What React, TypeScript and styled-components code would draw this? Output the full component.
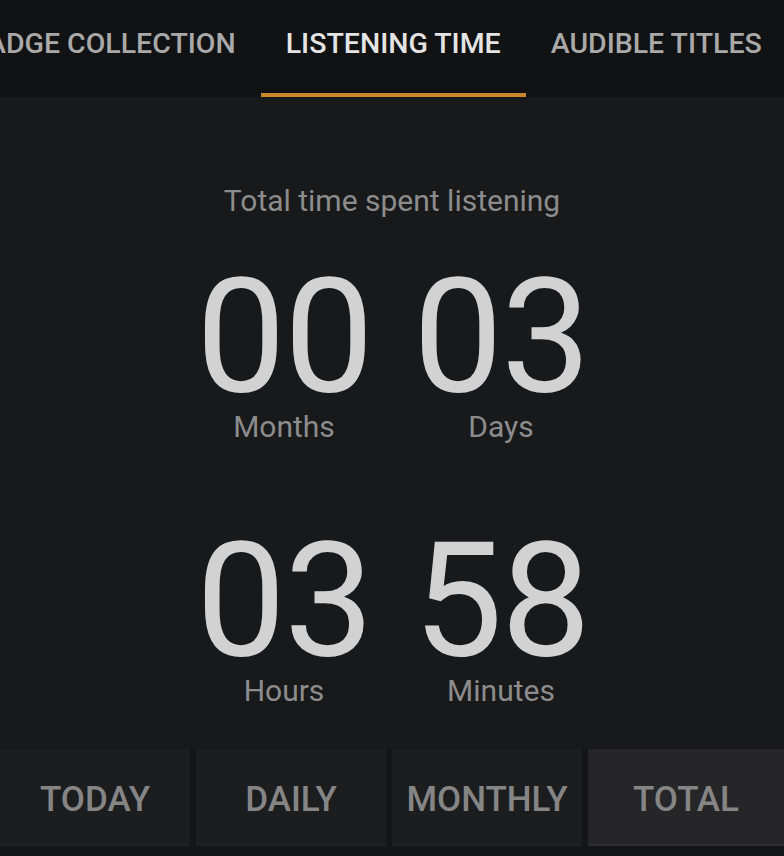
import React from "react";
import styled, { createGlobalStyle } from "styled-components";

const Global = createGlobalStyle`
  html, body { margin: 0; padding: 0; background: #18191b; }
  body { font-family: Roboto, "Noto Sans", Arial, sans-serif; }
  * { box-sizing: border-box; }
`;

const Screen = styled.div`
  width: 784px;
  height: 856px;
  display: flex;
  flex-direction: column;
  background: #18191b;
  overflow: hidden;
`;

const TabBar = styled.div`
  height: 97px;
  background: #111214;
  overflow: hidden;
  flex-shrink: 0;
`;

const TabStrip = styled.div`
  display: flex;
  height: 100%;
  margin-left: -56px;
`;

const Tab = styled.div<{ $active?: boolean }>`
  position: relative;
  flex-shrink: 0;
  padding: 28px 25px 0;
  font-size: 28.5px;
  line-height: 32px;
  font-weight: 500;
  white-space: nowrap;
  color: ${(p) => (p.$active ? "#e4e4e4" : "#a9a9a9")};
`;

const Indicator = styled.div`
  position: absolute;
  left: 0;
  right: 0;
  bottom: 0;
  height: 4px;
  background: #c8882a;
`;

const Body = styled.div`
  flex: 1;
  display: flex;
  flex-direction: column;
  align-items: center;
  padding-top: 87px;
`;

const Subtitle = styled.div`
  font-size: 30px;
  line-height: 34px;
  color: #8c8c8d;
  margin-bottom: 49px;
`;

const Grid = styled.div`
  display: grid;
  grid-template-columns: 200px 200px;
  column-gap: 17px;
  row-gap: 87px;
  margin-left: 1px;
`;

const Cell = styled.div`
  display: flex;
  flex-direction: column;
  align-items: center;
`;

const Value = styled.div`
  font-size: 160px;
  line-height: 140px;
  font-weight: 400;
  color: #d2d2d3;
  letter-spacing: -2px;
`;

const Unit = styled.div`
  margin-top: 3px;
  font-size: 30px;
  line-height: 34px;
  color: #8c8c8d;
`;

const RangeBar = styled.div`
  display: grid;
  grid-template-columns: repeat(3, 190px) 1fr;
  column-gap: 6px;
  background: #141517;
  padding-bottom: 10px;
  border-top: 1px solid #161719;
`;

const RangeButton = styled.div<{ $selected?: boolean }>`
  height: 97px;
  display: flex;
  align-items: center;
  justify-content: center;
  background: ${(p) => (p.$selected ? "#262628" : "#1c1d1f")};
  border-bottom: 2px solid ${(p) => (p.$selected ? "#2c2c2e" : "#1f2022")};
  font-size: 35px;
  font-weight: 500;
  color: #858586;
  padding-top: 6px;
`;

const stats = [
  { value: "00", unit: "Months" },
  { value: "03", unit: "Days" },
  { value: "03", unit: "Hours" },
  { value: "58", unit: "Minutes" },
];

const ranges = ["TODAY", "DAILY", "MONTHLY", "TOTAL"];

export default function App() {
  return (
    <>
      <Global />
      <Screen>
        <TabBar>
          <TabStrip>
            <Tab>BADGE COLLECTION</Tab>
            <Tab $active>
              LISTENING TIME
              <Indicator />
            </Tab>
            <Tab>AUDIBLE TITLES</Tab>
          </TabStrip>
        </TabBar>
        <Body>
          <Subtitle>Total time spent listening</Subtitle>
          <Grid>
            {stats.map((s) => (
              <Cell key={s.unit}>
                <Value>{s.value}</Value>
                <Unit>{s.unit}</Unit>
              </Cell>
            ))}
          </Grid>
        </Body>
        <RangeBar>
          {ranges.map((r) => (
            <RangeButton key={r} $selected={r === "TOTAL"}>
              {r}
            </RangeButton>
          ))}
        </RangeBar>
      </Screen>
    </>
  );
}
